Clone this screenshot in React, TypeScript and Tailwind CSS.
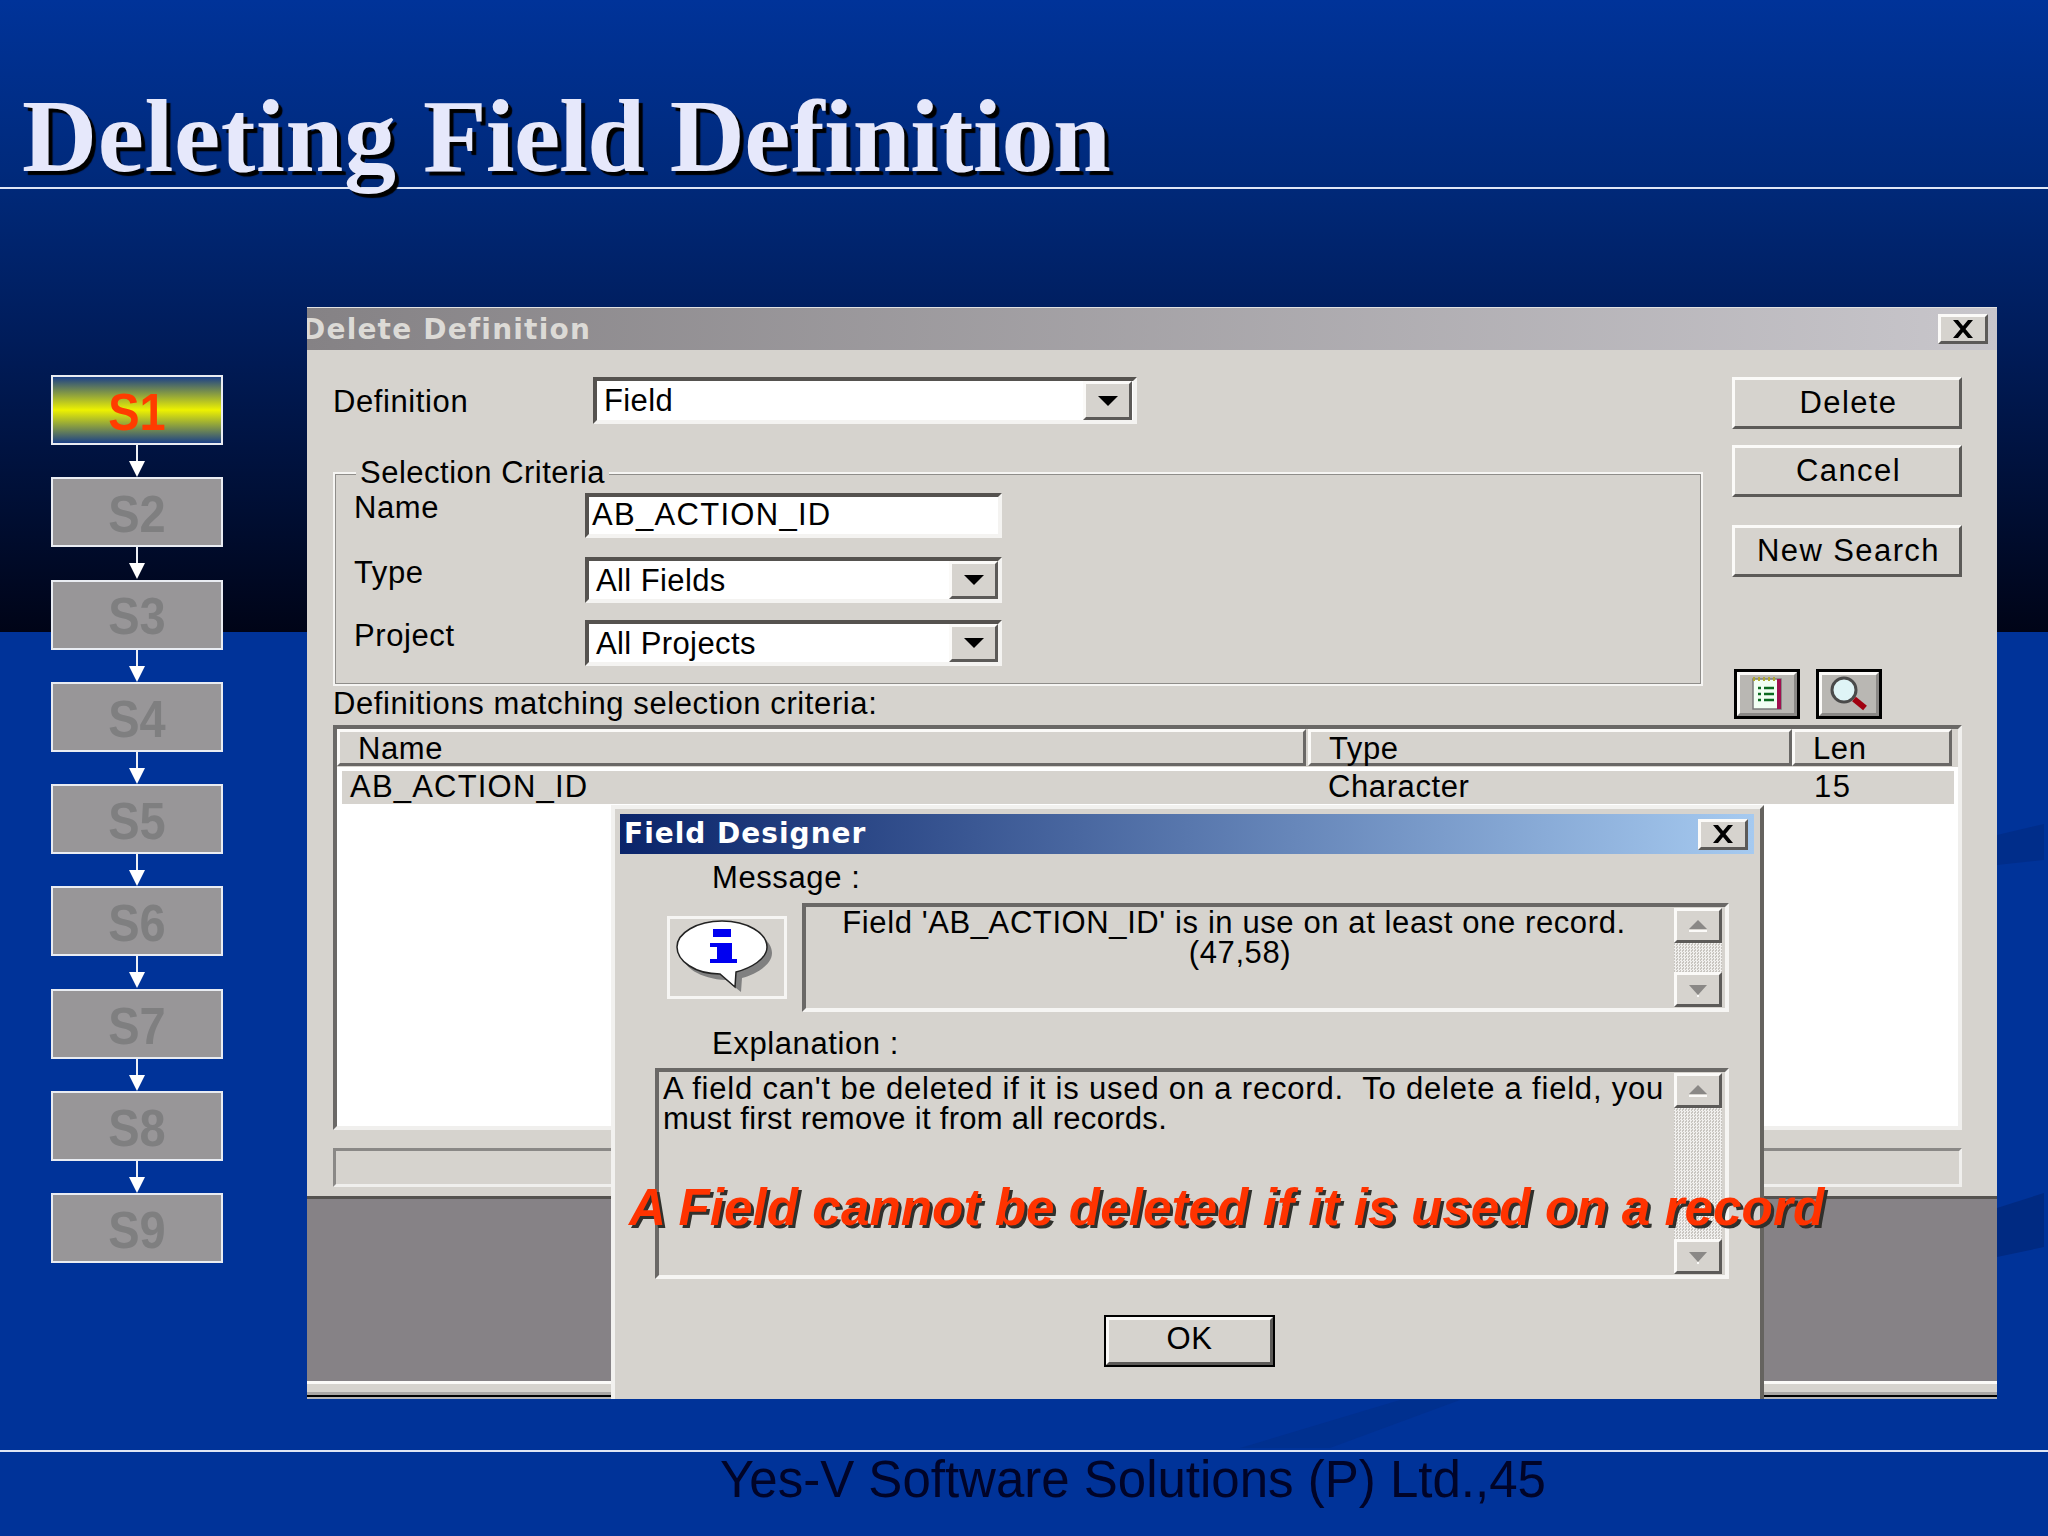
const ui = "font-['Liberation_Sans',Arial,sans-serif] text-[31px] tracking-[0.6px] text-black";

const Raised = ({ className = "", children }: { className?: string; children?: React.ReactNode }) => (
  <div className={`flex items-center justify-center border-[3px] border-t-[#fbfaf8] border-l-[#fbfaf8] border-r-[#5c5a58] border-b-[#5c5a58] bg-[#d6d3ce] ${className}`}>
    {children}
  </div>
);

const CloseX = () => (
  <svg width="26" height="20" viewBox="0 0 26 20">
    <path d="M3 1h5l5 6 5-6h5l-7.500 9 7.500 9h-5l-5-6-5 6H3l7.500-9z" fill="#000" />
  </svg>
);

const DropArrow = () => (
  <svg width="22" height="12" viewBox="0 0 22 12">
    <path d="M1 1h20L11 11z" fill="#000" />
  </svg>
);

const Combo = ({ text, className }: { text: string; className: string }) => (
  <div className={`flex items-stretch border-4 border-t-[#55524f] border-l-[#55524f] border-r-[#f4f3f1] border-b-[#f4f3f1] bg-white ${className}`}>
    <div className="flex flex-1 items-center pl-[7px] pt-[2px] tracking-[0.400px]">{text}</div>
    <Raised className="w-[49px]">
      <DropArrow />
    </Raised>
  </div>
);

const ActionButton = ({ label, className }: { label: string; className: string }) => (
  <Raised className={`h-[52px] w-[230px] pl-[3px] tracking-[1.400px] ${className}`}>{label}</Raised>
);

const ScrollButton = ({ down }: { down?: boolean }) => (
  <Raised className="h-[35px] w-[48px] shrink-0">
    <svg width="24" height="14" viewBox="0 0 24 14">
      {down ? <path d="M3 2h18l-9 10z" fill="#8a8886" /> : <path d="M12 1l9 9H3z" fill="#8a8886" />}
      <path d={down ? "M11 12h2v2h-2z" : "M3 11h18v2H3z"} fill="#fbfaf8" />
    </svg>
  </Raised>
);

const ScrollBar = () => (
  <div className="mr-[3px] flex w-[48px] shrink-0 flex-col py-[1px]">
    <ScrollButton />
    <div className="flex-1 bg-[repeating-conic-gradient(#f1f0ee_0_25%,#c8c5c0_0_50%)] bg-[length:3px_3px]" />
    <ScrollButton down />
  </div>
);

const StepBox = ({ label, active }: { label: string; active?: boolean }) => (
  <div
    className={`flex h-[70px] w-[172px] items-center justify-center border-2 border-[#e9ecf2] pt-[4px] font-['Liberation_Sans',Arial,sans-serif] text-[47px] font-bold ${
      active
        ? "bg-[linear-gradient(180deg,#1c4188_0%,#eef200_50%,#1c4188_100%)] text-[#ff3c00]"
        : "bg-[#989698] text-[#7f7f80]"
    }`}
  >
    <span className="inline-block scale-y-110">{label}</span>
  </div>
);

const StepArrow = () => (
  <div className="flex h-[32.300px] w-[172px] justify-center">
    <svg width="18" height="33" viewBox="0 0 18 33">
      <path d="M8 0h2v17H8z" fill="#eef0f5" />
      <path d="M1 16h16l-8 16z" fill="#fff" />
    </svg>
  </div>
);

const InfoBalloon = () => (
  <svg width="114" height="77" viewBox="3 3 114 77">
    <path d="M15 37c0-14 20-26 45-26s45 12 45 26c0 12-16 21-30 25l-1 14-15-12C33 63 15 51 15 37z" fill="#808080" />
    <path d="M10 31C10 17 30 5 55 5s45 12 45 26c0 12-16 21-31 25l-1 15-15-13C28 58 10 45 10 31z" fill="#fff" stroke="#222" strokeWidth="1.500" />
    <path d="M46 13h18v8H46zM43 27h22v16h5v4H43v-4h7V31h-7z" fill="#0000f0" />
  </svg>
);

const NoteIcon = () => (
  <svg width="32" height="36" viewBox="0 0 32 36">
    <path d="M2 3h28v30H2z" fill="#f2fff4" stroke="#7a7a7a" strokeWidth="1.500" />
    <path d="M26 3h4v30h-4z" fill="#a01050" />
    <path d="M3 1v4M8 1v4M13 1v4M18 1v4M23 1v4" stroke="#b0a830" strokeWidth="2" />
    <path d="M7 12h3M13 12h10M7 18h3M13 18h10M7 24h3M13 24h10" stroke="#0c6a20" strokeWidth="2.500" />
  </svg>
);

const LensIcon = () => (
  <svg width="44" height="38" viewBox="0 0 44 38">
    <circle cx="17" cy="15" r="12" fill="#dff4f6" stroke="#4a4a4a" strokeWidth="3" />
    <path d="M27 24l11 9" stroke="#a00010" strokeWidth="6" />
  </svg>
);

const IconButton = ({ children }: { children: React.ReactNode }) => (
  <div className="border-[3px] border-black">
    <Raised className="h-[44px] w-[60px] !border-r-[#8a8886] !border-b-[#8a8886] !bg-[#b9b7b3]">{children}</Raised>
  </div>
);

const HeaderCell = ({ label, className }: { label: string; className: string }) => (
  <div className={`flex h-[37px] items-center border-[3px] border-t-[#fbfaf8] border-l-[#fbfaf8] border-r-[#6a6866] border-b-[#6a6866] pl-[18px] pt-[3px] ${className}`}>
    {label}
  </div>
);

const FieldDesignerDialog = () => (
  <div className="absolute left-[304px] top-[497px] h-[595px] w-[1153px] border-l-4 border-t-4 border-r-4 border-l-[#f2f1ef] border-t-[#f2f1ef] border-r-[#65635f] bg-[#d6d3ce] pl-[5px] pt-[5px]">
    <div className="flex h-[40px] w-[1134px] items-center justify-between bg-[linear-gradient(90deg,#0a246a,#a6caf0)] pl-[4px] pr-[6px]">
      <span className="font-['DejaVu_Sans',sans-serif] text-[28px] font-bold tracking-[1px] text-white">Field Designer</span>
      <Raised className="h-[31px] w-[50px]">
        <CloseX />
      </Raised>
    </div>
    <div className="flex h-[49px] items-center pl-[92px]">Message :</div>
    <div className="flex">
      <div className="ml-[47px] mt-[13px] flex h-[83px] w-[120px] items-center justify-center border-[3px] border-[#f6f5f3]">
        <InfoBalloon />
      </div>
      <div className="ml-[15px] flex h-[109px] w-[927px] border-4 border-t-[#6a6866] border-l-[#6a6866] border-r-[#f6f5f3] border-b-[#f6f5f3]">
        <div className="flex-1 pt-[1px] text-center leading-[30px]">
          <div className="pr-[12px]">Field 'AB_ACTION_ID' is in use on at least one record.</div>
          <div>(47,58)</div>
        </div>
        <ScrollBar />
      </div>
    </div>
    <div className="mt-[8px] flex h-[48px] items-center pl-[92px]">Explanation :</div>
    <div className="ml-[35px] flex h-[211px] w-[1074px] border-4 border-t-[#6a6866] border-l-[#6a6866] border-r-[#f6f5f3] border-b-[#f6f5f3]">
      <div className="flex-1 whitespace-pre pl-[4px] pt-[2px] leading-[30px]">
        <div className="tracking-[0.800px]">A field can't be deleted if it is used on a record.  To delete a field, you</div>
        <div className="tracking-[0.300px]">must first remove it from all records.</div>
      </div>
      <ScrollBar />
    </div>
    <div className="ml-[484px] mt-[36px] h-[52px] w-[171px] border-2 border-black">
      <Raised className="h-full w-full pb-[4px] !border-b-[#5c5a58]">OK</Raised>
    </div>
  </div>
);

const DeleteDefinitionWindow = () => (
  <div className={`relative flex h-[1092px] w-[1690px] flex-col overflow-hidden border-t border-[#e2e2e2] ${ui}`}>
    <div className="flex h-[42px] shrink-0 items-center justify-between overflow-hidden bg-[linear-gradient(90deg,#858285,#c8c6cb)] pr-[9px]">
      <span className="-ml-[5px] pt-[2px] font-['DejaVu_Sans',sans-serif] text-[28px] font-bold tracking-[1.200px] text-[#dcdad6]">Delete Definition</span>
      <Raised className="h-[30px] w-[50px]">
        <CloseX />
      </Raised>
    </div>

    <div className="h-[849px] shrink-0 border-b-[3px] border-[#55524f] bg-[#d6d3ce] px-[26px] pt-[27px]">
      <div className="flex h-[343px] gap-[29px]">
        <div className="w-[1370px]">
          <div className="flex h-[47px] items-center">
            <span className="w-[260px] pt-[3px]">Definition</span>
            <Combo text="Field" className="h-[47px] w-[544px] pr-[1px]" />
          </div>
          <div className="mt-[48px] h-[214px] border-2 border-[#f6f5f3] pl-[19px] shadow-[inset_0_0_0_1px_#8f8d8a]">
            <div className="-mt-[20px] mb-[1px] ml-[2px] h-[38px] w-fit bg-[#d6d3ce] px-[4px] leading-[38px] tracking-[0.500px]">Selection Criteria</div>
            <div className="flex h-[45px] items-center">
              <span className="w-[231px] pb-[14px]">Name</span>
              <div className="flex h-[45px] w-[417px] items-center border-4 border-t-[#55524f] border-l-[#55524f] border-r-[#f4f3f1] border-b-[#f4f3f1] bg-white pl-[3px] tracking-[1.300px]">AB_ACTION_ID</div>
            </div>
            <div className="mt-[19px] flex h-[46px] items-center">
              <span className="w-[231px] pb-[14px]">Type</span>
              <Combo text="All Fields" className="h-[46px] w-[417px]" />
            </div>
            <div className="mt-[17px] flex h-[46px] items-center">
              <span className="w-[231px] pb-[14px]">Project</span>
              <Combo text="All Projects" className="h-[46px] w-[417px]" />
            </div>
          </div>
          <div className="flex h-[34px] items-center pt-[2px]">Definitions matching selection criteria:</div>
        </div>

        <div className="w-[230px]">
          <ActionButton label="Delete" className="" />
          <ActionButton label="Cancel" className="mt-[16px]" />
          <ActionButton label="New Search" className="mt-[28px]" />
          <div className="ml-[2px] mt-[92px] flex gap-[16px]">
            <IconButton>
              <NoteIcon />
            </IconButton>
            <IconButton>
              <LensIcon />
            </IconButton>
          </div>
        </div>
      </div>

      <div className="mt-[5px] h-[405px] w-[1629px] border-4 border-t-[#6a6866] border-l-[#6a6866] border-r-[#f0efed] border-b-[#f0efed] bg-white">
        <div className="flex bg-[#d6d3ce] pb-[1px]">
          <HeaderCell label="Name" className="w-[969px]" />
          <HeaderCell label="Type" className="ml-[2px] w-[484px]" />
          <HeaderCell label="Len" className="w-[160px]" />
        </div>
        <div className="ml-[5px] mt-[4px] flex h-[33px] w-[1612px] items-center bg-[#d6d3ce]">
          <span className="w-[986px] pl-[8px] tracking-[1.200px]">AB_ACTION_ID</span>
          <span className="w-[486px]">Character</span>
          <span className="tracking-[1.500px]">15</span>
        </div>
      </div>

      <div className="mt-[18px] h-[39px] w-[1629px] border-[3px] border-t-[#8a8886] border-l-[#8a8886] border-r-[#f0efed] border-b-[#f0efed]" />
    </div>

    <div className="flex-1 bg-[#868286]" />
    <div className="h-[14px] shrink-0 border-t-[3px] border-b-[3px] border-t-[#fbfaf8] border-b-[#a8a6a4] bg-[#d6d3ce]" />
    <div className="h-[2px] shrink-0 bg-black" />
    <div className="h-[2px] shrink-0 bg-[#b5b5b5]" />

    <FieldDesignerDialog />
    <div className="absolute left-[322px] top-[870px] whitespace-nowrap font-['Liberation_Sans',Arial,sans-serif] text-[51.300px] font-bold italic leading-[60px] tracking-normal text-[#ff3300] [text-shadow:3px_3px_0_#30302c]">
      A Field cannot be deleted if it is used on a record
    </div>
  </div>
);

// faint slanted shapes of the slide background
const BackdropShapes = () => (
  <svg className="absolute left-0 top-0" width="2048" height="1536" viewBox="0 0 2048 1536">
    <path d="M1997 835l47-11v36l-47 5z" fill="#002d8a" />
    <path d="M1997 1208l47-15v54l-47 10z" fill="#002a82" />
    <path d="M1240 1448l160-48h60l-130 48z" fill="#00308f" />
  </svg>
);

export default function App() {
  return (
    <div className="relative flex h-[1536px] w-[2048px] flex-col overflow-hidden bg-[linear-gradient(180deg,#003399_0px,#002a7c_170px,#001c5a_340px,#000417_632px,#003399_632px,#003399_100%)]">
      <BackdropShapes />
      <div className="relative h-[189px] shrink-0 border-b-2 border-[#dfe6f5] pl-[22px]">
        <h1 className="whitespace-nowrap pt-[76px] font-['Liberation_Serif','Times_New_Roman',serif] text-[104px] font-bold leading-[120px] text-[#e6e8fb] [text-shadow:4px_4px_1px_#000]">
          <span className="tracking-[0.600px]">Deleting </span>
          <span className="tracking-[-0.800px]">Field </span>
          <span className="tracking-[-0.400px]">Definition</span>
        </h1>
      </div>

      <div className="relative mt-[118px] flex h-[1092px] shrink-0 pl-[51px]">
        <div className="mt-[68px] w-[256px] shrink-0">
          {["S1", "S2", "S3", "S4", "S5", "S6", "S7", "S8", "S9"].map((label, i) => (
            <div key={label}>
              <StepBox label={label} active={i === 0} />
              {i < 8 && <StepArrow />}
            </div>
          ))}
        </div>
        <DeleteDefinitionWindow />
      </div>

      <div className="relative mt-[51px] flex-1 border-t-2 border-[#dfe6f5] pl-[720px]">
        <div className="whitespace-nowrap font-['Liberation_Sans',Arial,sans-serif] text-[51px] leading-[56px] text-[#000428]">
          Yes-V Software Solutions (P) Ltd.,45
        </div>
      </div>
    </div>
  );
}
